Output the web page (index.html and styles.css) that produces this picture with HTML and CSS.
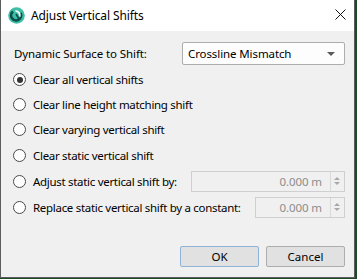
FILE: index.html
```
<!DOCTYPE html>
<html>
<head>
<meta charset="UTF-8">
<title>Adjust Vertical Shifts</title>
<link rel="stylesheet" href="styles.css">
</head>
<body>
<div class="window">
  <div class="titlebar">
    <svg class="app-icon" width="17" height="17" viewBox="0 0 17 17">
      <circle cx="8.5" cy="8.5" r="8.3" fill="#3dbfa5"/>
      <path d="M5 4.5 A5 5 0 1 0 12.5 6" fill="none" stroke="#0b4f4a" stroke-width="2.6"/>
      <path d="M7.5 4.2 A4.2 4.2 0 0 1 11.8 9.5" fill="none" stroke="#ffffff" stroke-width="1.8"/>
      <path d="M8 7 L11 12" stroke="#0b4f4a" stroke-width="1.6"/>
    </svg>
    <span class="title">Adjust Vertical Shifts</span>
    <svg class="close" width="11" height="11" viewBox="0 0 11 11">
      <path d="M0.5 0.5 L10.5 10.5 M10.5 0.5 L0.5 10.5" stroke="#111" stroke-width="1"/>
    </svg>
  </div>

  <div class="content">
    <div class="combo-row">
      <span class="label">Dynamic Surface to Shift:</span>
      <div class="combo">
        <span>Crossline Mismatch</span>
        <span class="arrow"></span>
      </div>
    </div>

    <div class="row"><span class="radio checked"></span><span class="label">Clear all vertical shifts</span></div>
    <div class="row"><span class="radio"></span><span class="label">Clear line height matching shift</span></div>
    <div class="row"><span class="radio"></span><span class="label">Clear varying vertical shift</span></div>
    <div class="row tall"><span class="radio"></span><span class="label">Clear static vertical shift</span></div>
    <div class="row tall">
      <span class="radio"></span><span class="label">Adjust static vertical shift by:</span>
      <div class="spin spin-wide"><span class="value">0.000 m</span><span class="spin-btns"><i class="up"></i><i class="down"></i></span></div>
    </div>
    <div class="row tall">
      <span class="radio"></span><span class="label">Replace static vertical shift by a constant:</span>
      <div class="spin spin-narrow"><span class="value">0.000 m</span><span class="spin-btns"><i class="up"></i><i class="down"></i></span></div>
    </div>

    <div class="buttons">
      <button class="btn default">OK</button>
      <button class="btn">Cancel</button>
    </div>
  </div>
</div>
</body>
</html>
```

FILE: styles.css
```
body {
  margin: 0;
  background: #1d4a22;
  font-family: "Noto Sans", "Open Sans", sans-serif;
  font-size: 11.5px;
  letter-spacing: -0.1px;
  color: #000;
}

.window {
  width: 353px;
  height: 277px;
  border: 1px solid #5c5c5c;
  border-top: none;
  background: #f0f0f0;
  display: flex;
  flex-direction: column;
}

.titlebar {
  height: 31px;
  background: #fff;
  display: flex;
  align-items: center;
  padding-left: 7px;
  padding-right: 8px;
}

.app-icon {
  margin-right: 6px;
}

.title {
  flex: 1;
  font-size: 12px;
  margin-top: -1px;
}

.close {
  margin-top: -2px;
}

.content {
  padding: 11px 9px 0 12px;
  display: flex;
  flex-direction: column;
  white-space: nowrap;
}

.combo-row {
  display: flex;
  align-items: center;
  justify-content: space-between;
  height: 23px;
  margin-bottom: 2px;
}

.combo-row .label {
  padding-left: 1px;
}

.combo {
  height: 21px;
  width: 147px;
  border: 1px solid #adadad;
  border-radius: 2px;
  background: #fdfdfd;
  display: flex;
  align-items: center;
  justify-content: space-between;
  padding: 0 9px 0 5px;
}

.arrow {
  width: 0;
  height: 0;
  border-left: 4px solid transparent;
  border-right: 4px solid transparent;
  border-top: 4px solid #5a5a5a;
}

.row {
  height: 25px;
  display: flex;
  align-items: center;
}

.row.tall {
  height: 26px;
}

.radio {
  width: 11px;
  height: 11px;
  border: 1px solid #4a4a4a;
  border-radius: 50%;
  background: #fff;
  margin-right: 7px;
  position: relative;
  flex: none;
}

.radio.checked::after {
  content: "";
  position: absolute;
  left: 2.5px;
  top: 2.5px;
  width: 6px;
  height: 6px;
  border-radius: 50%;
  background: #333;
}

.row .label {
  flex: 1;
  min-width: 0;
  letter-spacing: -0.3px;
}

.spin {
  flex: none;
  height: 19px;
  border: 1px solid #cfcfcf;
  background: #f0f0f0;
  display: flex;
  align-items: center;
  color: #8d8d8d;
}

.spin-wide {
  width: 152px;
}

.spin-narrow {
  width: 88px;
}

.spin .value {
  flex: 1;
  text-align: right;
  padding-right: 8px;
}

.spin-btns {
  width: 12px;
  height: 19px;
  border-left: 1px solid #d9d9d9;
  display: flex;
  flex-direction: column;
  align-items: center;
  justify-content: center;
  gap: 2px;
  padding-right: 1px;
}

.spin-btns i {
  width: 0;
  height: 0;
  border-left: 3px solid transparent;
  border-right: 3px solid transparent;
}

.spin-btns .up {
  border-bottom: 3px solid #a8a8a8;
}

.spin-btns .down {
  border-top: 3px solid #a8a8a8;
}

.buttons {
  display: flex;
  justify-content: flex-end;
  gap: 7px;
  margin-top: 26px;
}

.btn {
  width: 79px;
  height: 21px;
  font-family: "Noto Sans", "Open Sans", sans-serif;
  font-size: 11.5px;
  background: #e1e1e1;
  border: 1px solid #adadad;
  border-radius: 2px;
  padding: 0;
  color: #000;
}

.btn.default {
  border-color: #8fb3d6;
}
```
